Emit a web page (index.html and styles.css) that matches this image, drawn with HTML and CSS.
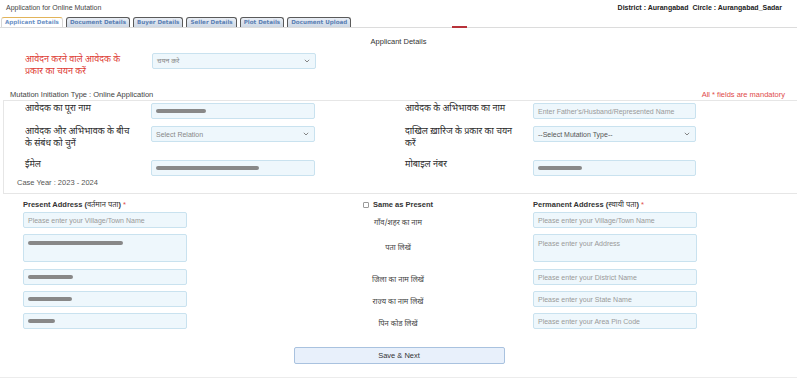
FILE: index.html
```html
<!DOCTYPE html>
<html lang="hi">
<head>
<meta charset="utf-8">
<title>Application for Online Mutation</title>
<link rel="stylesheet" href="styles.css">
</head>
<body>
<div class="header">
  <div class="title">Application for Online Mutation</div>
  <div class="district">District : Aurangabad&nbsp; Circle : Aurangabad_Sadar</div>
</div>
<div class="tabbar">
  <span class="tab active">Applicant Details</span>
  <span class="tab">Document Details</span>
  <span class="tab">Buyer Details</span>
  <span class="tab">Seller Details</span>
  <span class="tab">Plot Details</span>
  <span class="tab">Document Upload</span>
  <span class="tab-mark"></span>
</div>
<div class="section-title">Applicant Details</div>

<div class="type-row">
  <div class="label red hi">आवेदन करने वाले आवेदक के प्रकार का चयन करें</div>
  <div class="field select"><span class="hi">चयन करे</span><svg class="chev" viewBox="0 0 6 4" width="6" height="4"><path d="M0.8 0.8 L3 3 L5.2 0.8" fill="none" stroke="#777" stroke-width="0.9"/></svg></div>
</div>

<div class="meta-row">
  <span>Mutation Initiation Type : Online Application</span>
  <span class="mandatory">All * fields are mandatory</span>
</div>

<div class="panel">
  <div class="panel-grid">
    <div class="label hi">आवेदक का पूरा नाम</div>
    <div class="field"><span class="blur w50"></span></div>
    <div></div>
    <div class="label hi">आवेदक के अभिभावक का नाम</div>
    <div class="field"><span class="ph">Enter Father's/Husband/Represented Name</span></div>

    <div class="label hi">आवेदक और अभिभावक के बीच के संबंध को चुनें</div>
    <div class="field select"><span class="opt">Select Relation</span><svg class="chev" viewBox="0 0 6 4" width="6" height="4"><path d="M0.8 0.8 L3 3 L5.2 0.8" fill="none" stroke="#777" stroke-width="0.9"/></svg></div>
    <div></div>
    <div class="label hi">दाखिल ख़ारिज के प्रकार का चयन करें</div>
    <div class="field select"><span class="opt dark">--Select Mutation Type--</span><svg class="chev" viewBox="0 0 6 4" width="6" height="4"><path d="M0.8 0.8 L3 3 L5.2 0.8" fill="none" stroke="#777" stroke-width="0.9"/></svg></div>

    <div class="label hi">ईमेल</div>
    <div class="field low"><span class="blur w103"></span></div>
    <div></div>
    <div class="label hi">मोबाइल नंबर</div>
    <div class="field low"><span class="blur w44"></span></div>
  </div>
  <div class="case-year">Case Year : 2023 - 2024</div>
</div>

<div class="address">
  <div class="col-left addr-head">Present Address (<span class="hi">वर्तमान पता</span>) <span class="star">*</span></div>
  <div class="col-mid addr-head"><span class="checkbox"></span>Same as Present</div>
  <div class="col-right addr-head">Permanent Address (<span class="hi">स्थायी पता</span>) <span class="star">*</span></div>

  <div class="col-left"><div class="field wide"><span class="ph">Please enter your Village/Town Name</span></div></div>
  <div class="col-mid mid-label hi">गाँव/शहर का नाम</div>
  <div class="col-right"><div class="field wide"><span class="ph">Please enter your Village/Town Name</span></div></div>

  <div class="col-left"><div class="field wide area"><span class="blur w95"></span></div></div>
  <div class="col-mid mid-label tall hi">पता लिखें</div>
  <div class="col-right"><div class="field wide area"><span class="ph">Please enter your Address</span></div></div>

  <div class="col-left"><div class="field wide"><span class="blur w45"></span></div></div>
  <div class="col-mid mid-label hi">जिला का नाम लिखें</div>
  <div class="col-right"><div class="field wide"><span class="ph">Please enter your District Name</span></div></div>

  <div class="col-left"><div class="field wide"><span class="blur w44"></span></div></div>
  <div class="col-mid mid-label hi">राज्य का नाम लिखें</div>
  <div class="col-right"><div class="field wide"><span class="ph">Please enter your State Name</span></div></div>

  <div class="col-left"><div class="field wide"><span class="blur w27"></span></div></div>
  <div class="col-mid mid-label hi">पिन कोड लिखें</div>
  <div class="col-right"><div class="field wide"><span class="ph">Please enter your Area Pin Code</span></div></div>
</div>

<div class="actions">
  <button class="btn" type="button">Save &amp; Next</button>
</div>
</body>
</html>
```
FILE: styles.css
```css
* { box-sizing: border-box; }
html, body { margin: 0; padding: 0; }
body {
  width: 797px;
  height: 382px;
  overflow: hidden;
  background: #fff;
  color: #333;
  font-family: "Liberation Sans", Arial, "Noto Sans", sans-serif;
}
.hi { font-family: "Noto Sans Devanagari", "Lohit Devanagari", "Noto Sans", "Liberation Sans", sans-serif; }

.header {
  display: flex;
  justify-content: space-between;
  align-items: center;
  height: 14px;
  padding: 0 15px 0 6px;
}
.title { font-size: 7px; color: #444; }
.district { font-size: 7px; font-weight: bold; color: #222; }

.tabbar {
  position: relative;
  display: flex;
  align-items: flex-end;
  gap: 3px;
  height: 14px;
  padding-left: 1px;
  border-bottom: 1px solid #dcdcdc;
}
.tab {
  height: 10px;
  line-height: 9px;
  padding: 0 3px;
  font-family: "DejaVu Sans", Verdana, sans-serif;
  font-size: 5.6px;
  font-weight: bold;
  color: #5a80b4;
  background: linear-gradient(#e9eef5, #cdd7e4);
  border: 1px solid #5a5a5a;
  border-bottom: none;
  border-radius: 3px 3px 0 0;
  white-space: nowrap;
}
.tab.active {
  color: #6d92c6;
  background: #fff;
  border-color: #d6d6d6;
  border-top: 1px solid #e2b45a;
}
.tab-mark {
  position: absolute;
  left: 452px;
  bottom: -1px;
  width: 15px;
  height: 2px;
  background: #b8323a;
}

.section-title {
  height: 24px;
  padding-top: 9px;
  text-align: center;
  font-size: 7.5px;
  line-height: 9px;
  color: #333;
}

.label {
  font-size: 9px;
  line-height: 12px;
  color: #2a2a2a;
  padding-top: 1px;
  padding-right: 18px;
}
.label.red { color: #dd3a33; }

.field {
  display: flex;
  align-items: center;
  justify-content: space-between;
  height: 16px;
  margin-top: 1px;
  padding: 0 5px 0 4px;
  background: #eef7fc;
  border: 1px solid #c9e2ef;
  border-radius: 2px;
  font-size: 7px;
  color: #777;
  overflow: hidden;
  white-space: nowrap;
}
.field.low { margin-top: 2px; }
.select .hi { font-size: 7px; color: #888; }
.opt { color: #888; }
.opt.dark { color: #555; }
.ph { color: #999; }
.chev { flex: none; }

.blur {
  display: block;
  height: 4px;
  border-radius: 2px;
  background: #888;
  filter: blur(0.6px);
}
.w27 { width: 27px; }
.w44 { width: 44px; }
.w45 { width: 45px; }
.w50 { width: 50px; }
.w95 { width: 95px; }
.w103 { width: 103px; }

.type-row {
  display: grid;
  grid-template-columns: 127px 164px;
  padding-left: 25px;
  height: 38px;
}
.type-row .label { padding-top: 2px; padding-right: 20px; }

.meta-row {
  display: flex;
  justify-content: space-between;
  height: 10px;
  padding: 0 12px 0 10px;
  font-size: 7.5px;
  line-height: 10px;
  color: #444;
}
.mandatory { color: #e04b4b; }

.panel {
  margin-left: 3px;
  height: 94px;
  border: 1px solid #e6e6e6;
  border-right: none;
  padding-top: 1px;
}
.panel-grid {
  display: grid;
  grid-template-columns: 126px 164px 90px 128px 163px;
  grid-template-rows: 23px 33px 20px;
  align-items: start;
  padding-left: 21px;
}
.case-year {
  padding-left: 13px;
  font-size: 7.5px;
  line-height: 10px;
  color: #555;
}

.address {
  display: grid;
  grid-template-columns: 265px 266px 266px;
  grid-template-rows: 18px 22px 35px 22px 22px 17px;
  align-items: start;
}
.col-left { padding-left: 23px; }
.col-right { padding-left: 2px; }
.col-mid { text-align: center; }
.field.wide { width: 164px; margin-top: 0; }
.field.area { height: 28px; align-items: flex-start; padding-top: 5px; }
.field.area .blur { margin-top: 1px; }
.addr-head {
  align-self: end;
  padding-bottom: 2px;
  font-size: 7.5px;
  line-height: 10px;
  font-weight: bold;
  color: #333;
}
.addr-head .hi { font-weight: normal; }
.star { color: #e04b4b; font-weight: normal; }
.checkbox {
  display: inline-block;
  width: 6px;
  height: 6px;
  margin-right: 4px;
  border: 1px solid #9a9a9a;
  border-radius: 1px;
  vertical-align: -1px;
  background: #fff;
}
.mid-label {
  padding-top: 6px;
  font-size: 7.5px;
  line-height: 11px;
  color: #444;
}
.mid-label.tall { padding-top: 9px; }

.actions {
  display: flex;
  justify-content: center;
  padding: 17px 0 13px;
  border-bottom: 1px solid #ececec;
}
.btn {
  width: 211px;
  height: 17px;
  margin: 0 0 0 1px;
  padding: 0;
  background: #e8f0fb;
  border: 1px solid #a9c2df;
  border-radius: 2px;
  font-family: "Liberation Sans", Arial, sans-serif;
  font-size: 7.5px;
  color: #333;
}
```
